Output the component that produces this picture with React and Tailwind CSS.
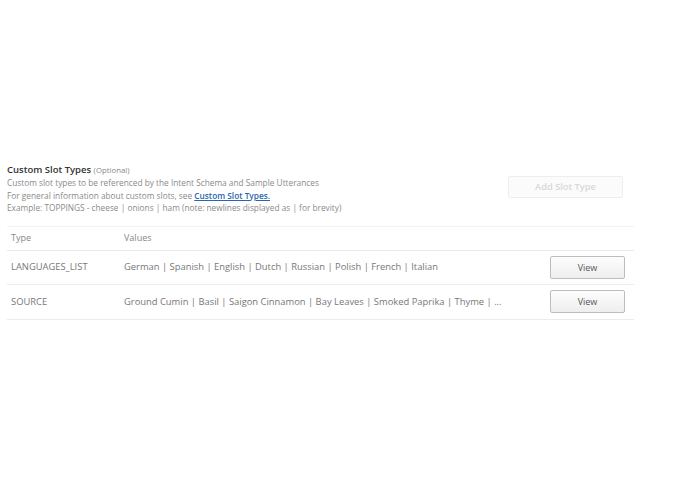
export default function App() {
  const rows = [
    { type: 'LANGUAGES_LIST', values: 'German | Spanish | English | Dutch | Russian | Polish | French | Italian' },
    { type: 'SOURCE', values: 'Ground Cumin | Basil | Saigon Cinnamon | Bay Leaves | Smoked Paprika | Thyme | ...' },
  ]
  return (
    <div className="w-[695px] h-[494px] bg-white" style={{ fontFamily: '"Open Sans", "DejaVu Sans", sans-serif' }}>
      <div className="pt-[163px] pl-[7px] pr-[61px]">
        <div className="flex justify-between">
          <div>
            <div className="text-[9.5px] leading-[14px] text-[#333] font-semibold">
              Custom Slot Types <span className="font-normal text-[7.8px] text-[#888]">(Optional)</span>
            </div>
            <div className="text-[8.3px] leading-[12.5px] text-[#8a8a8a]">
              <div>Custom slot types to be referenced by the Intent Schema and Sample Utterances</div>
              <div>For general information about custom slots, see <span className="text-[#2a66b0] underline font-semibold">Custom Slot Types.</span></div>
              <div>Example: TOPPINGS - cheese | onions | ham (note: newlines displayed as | for brevity)</div>
            </div>
          </div>
          <button className="mt-[13px] mr-[11px] w-[115px] h-[22px] border border-[#eeeeee] rounded-[2px] bg-[#fbfbfc] text-[9.3px] text-[#d8d8d8] font-semibold">
            Add Slot Type
          </button>
        </div>
        <div className="mt-[11px] border-t border-[#f2f2f2]">
          <div className="flex h-[24px] items-center border-b border-[#e9e9e9] text-[9px] text-[#888]">
            <div className="w-[117px] pl-[4px]">Type</div>
            <div>Values</div>
          </div>
          {rows.map(r => (
            <div key={r.type} className="flex h-[34.5px] items-center border-b border-[#ececec] text-[9.4px] text-[#777]">
              <div className="w-[117px] pl-[4px]">{r.type}</div>
              <div className="flex-1">{r.values}</div>
              <button className="mr-[9px] w-[75px] h-[23px] border border-[#bdbdbd] rounded-[2px] bg-gradient-to-b from-[#fdfdfd] to-[#eeeeee] text-[9px] text-[#555]">
                View
              </button>
            </div>
          ))}
        </div>
      </div>
    </div>
  )
}
